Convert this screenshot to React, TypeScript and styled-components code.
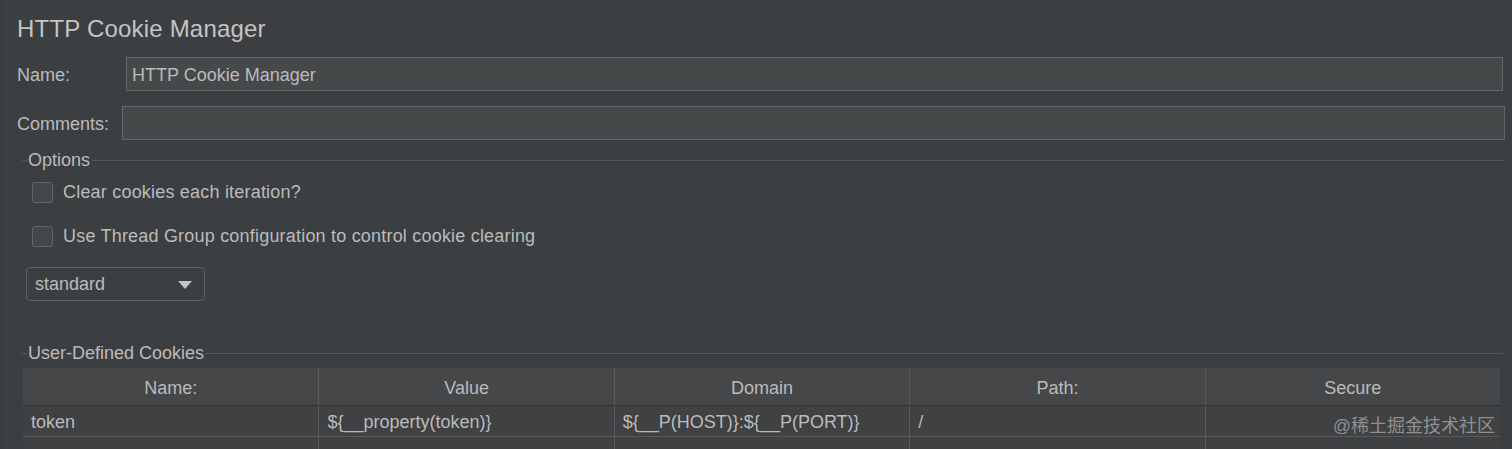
import React from "react";
import styled, { createGlobalStyle } from "styled-components";

const GlobalStyle = createGlobalStyle`
  html, body {
    margin: 0;
    padding: 0;
    background: #3c3f41;
  }
  body {
    font-family: "Liberation Sans", Arial, sans-serif;
    color: #bbbbbb;
    overflow: hidden;
  }
`;

const Page = styled.div`
  position: relative;
  width: 1512px;
  height: 449px;
  box-sizing: border-box;
  background: #3c3f41;
  border-left: 2px solid #393b3d;
  padding-left: 15px;
  display: flex;
  flex-direction: column;
  overflow: hidden;
  & > * {
    flex-shrink: 0;
  }
`;

const Title = styled.div`
  height: 57px;
  display: flex;
  align-items: center;
  font-size: 24px;
  color: #c4c4c4;
  letter-spacing: 0.2px;
`;

const FieldRow = styled.div<{ $labelWidth: number; $right: number; $top?: number }>`
  display: flex;
  align-items: center;
  height: 34px;
  margin-top: ${(p) => p.$top ?? 0}px;
  padding-right: ${(p) => p.$right}px;
  & > label {
    width: ${(p) => p.$labelWidth}px;
    flex: none;
    font-size: 18px;
    padding-top: 2px;
  }
`;

const TextInput = styled.div`
  flex: 1;
  height: 34px;
  box-sizing: border-box;
  border: 1px solid #646768;
  background: #45494a;
  display: flex;
  align-items: center;
  padding: 2px 0 0 5px;
  font-size: 18px;
  color: #bbbbbb;
`;

const Legend = styled.div<{ $top: number }>`
  display: flex;
  align-items: center;
  height: 20px;
  margin-top: ${(p) => p.$top}px;
  margin-left: 5px;
  margin-right: 9px;
  font-size: 18px;
  color: #bbbbbb;
  &::before {
    content: "";
    width: 5px;
    height: 1px;
    background: #55585a;
    margin-right: 1px;
  }
  &::after {
    content: "";
    flex: 1;
    height: 1px;
    background: #55585a;
    margin-left: 2px;
  }
`;

const CheckRow = styled.label<{ $top: number }>`
  display: flex;
  align-items: center;
  gap: 10px;
  height: 22px;
  margin-top: ${(p) => p.$top}px;
  margin-left: 15px;
  font-size: 18px;
  color: #bbbbbb;
  letter-spacing: 0.2px;
  & > span:last-child {
    padding-top: 1px;
  }
`;

const CheckBox = styled.span`
  width: 21px;
  height: 21px;
  box-sizing: border-box;
  border: 1px solid #626668;
  border-radius: 3px;
  background: #43474a;
  flex: none;
`;

const Select = styled.div`
  width: 179px;
  height: 34px;
  box-sizing: border-box;
  margin-top: 20px;
  margin-left: 9px;
  border: 1px solid #5e6163;
  border-radius: 4px;
  display: flex;
  align-items: center;
  justify-content: space-between;
  padding: 1px 12px 0 8px;
  font-size: 18px;
  color: #bbbbbb;
`;

const Arrow = styled.span`
  width: 0;
  height: 0;
  border-left: 7px solid transparent;
  border-right: 7px solid transparent;
  border-top: 8px solid #c4c4c4;
`;

const Table = styled.div`
  margin-top: 5px;
  margin-left: 6px;
  width: 1477px;
  display: flex;
  flex-direction: column;
`;

const Row = styled.div<{ $header?: boolean }>`
  display: grid;
  grid-template-columns: repeat(5, 1fr);
  height: ${(p) => (p.$header ? 38 : 31)}px;
  box-sizing: border-box;
  background: ${(p) => (p.$header ? "#454749" : "#3f4143")};
  border-bottom: 1px solid ${(p) => (p.$header ? "#303234" : "#575a5c")};
  flex: none;
`;

const Cell = styled.div<{ $header?: boolean }>`
  display: flex;
  align-items: center;
  justify-content: ${(p) => (p.$header ? "center" : "flex-start")};
  padding-left: ${(p) => (p.$header ? 0 : 8)}px;
  padding-top: ${(p) => (p.$header ? 4 : 2)}px;
  font-size: 18px;
  color: #bbbbbb;
  white-space: nowrap;
  overflow: hidden;
  & + & {
    border-left: 1px solid ${(p) => (p.$header ? "#303234" : "#575a5c")};
  }
`;

const Watermark = styled.div`
  position: absolute;
  right: 17px;
  top: 411px;
  font-family: "Liberation Sans", "Noto Sans CJK SC", sans-serif;
  font-size: 18px;
  color: rgba(200, 200, 200, 0.6);
`;

const headers = ["Name:", "Value", "Domain", "Path:", "Secure"];
const cookie = ["token", "${__property(token)}", "${__P(HOST)}:${__P(PORT)}", "/", ""];

export default function App() {
  return (
    <>
      <GlobalStyle />
      <Page>
        <Title>HTTP Cookie Manager</Title>
        <FieldRow $labelWidth={109} $right={9}>
          <label>Name:</label>
          <TextInput>HTTP Cookie Manager</TextInput>
        </FieldRow>
        <FieldRow $labelWidth={105} $right={7} $top={15}>
          <label>Comments:</label>
          <TextInput />
        </FieldRow>
        <Legend $top={10}>Options</Legend>
        <CheckRow $top={11}>
          <CheckBox />
          <span>Clear cookies each iteration?</span>
        </CheckRow>
        <CheckRow $top={22}>
          <CheckBox />
          <span>Use Thread Group configuration to control cookie clearing</span>
        </CheckRow>
        <Select>
          standard
          <Arrow />
        </Select>
        <Legend $top={42}>User-Defined Cookies</Legend>
        <Table>
          <Row $header>
            {headers.map((h) => (
              <Cell $header key={h}>
                {h}
              </Cell>
            ))}
          </Row>
          <Row>
            {cookie.map((c, i) => (
              <Cell key={i}>{c}</Cell>
            ))}
          </Row>
          <Row>
            {cookie.map((_, i) => (
              <Cell key={i} />
            ))}
          </Row>
        </Table>
        <Watermark>@稀土掘金技术社区</Watermark>
      </Page>
    </>
  );
}
